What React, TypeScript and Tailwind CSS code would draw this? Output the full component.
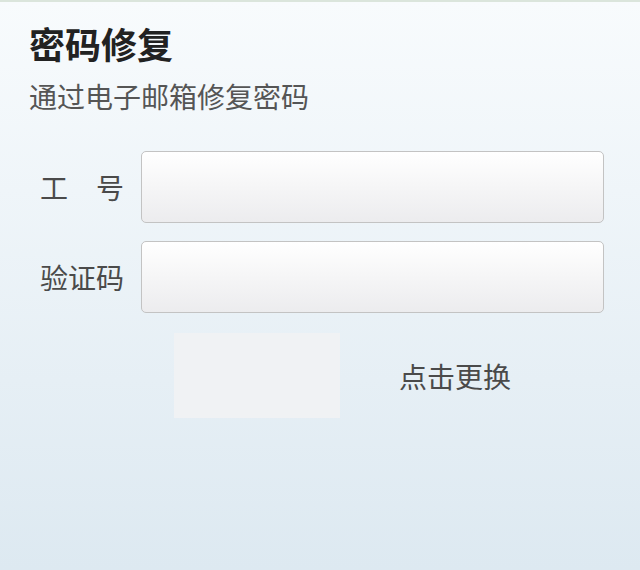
export default function App() {
  return (
    <div
      className="w-[640px] h-[570px] border-t-2 border-[#dbe5dc] bg-gradient-to-b from-[#f8fbfd] to-[#dde9f1] text-[#4a4a4a]"
      style={{ fontFamily: '"Noto Sans CJK SC", "Noto Sans", sans-serif' }}
    >
      <div className="pt-[23px] pl-[29px]">
        <h1 className="text-[36px] leading-[36px] font-bold text-[#222]">密码修复</h1>
        <p className="mt-[20px] text-[28px] leading-[30px] text-[#555]">通过电子邮箱修复密码</p>
      </div>

      <form className="mt-[40px] flex flex-col gap-[18px] pl-[40px] pr-[36px]">
        <div className="flex items-center">
          <label className="w-[101px] shrink-0 text-[28px] leading-none">工　号</label>
          <input className="h-[72px] flex-1 rounded-[5px] border border-[#c3c3c3] bg-gradient-to-b from-white to-[#ececee] outline-none" />
        </div>
        <div className="flex items-center">
          <label className="w-[101px] shrink-0 text-[28px] leading-none">验证码</label>
          <input className="h-[72px] flex-1 rounded-[5px] border border-[#c3c3c3] bg-gradient-to-b from-white to-[#ececee] outline-none" />
        </div>
      </form>

      <div className="mt-[20px] flex items-center pl-[174px]">
        <div className="h-[85px] w-[166px] bg-[#f0f2f4]" />
        <span className="ml-[59px] text-[28px] leading-none">点击更换</span>
      </div>
    </div>
  );
}
